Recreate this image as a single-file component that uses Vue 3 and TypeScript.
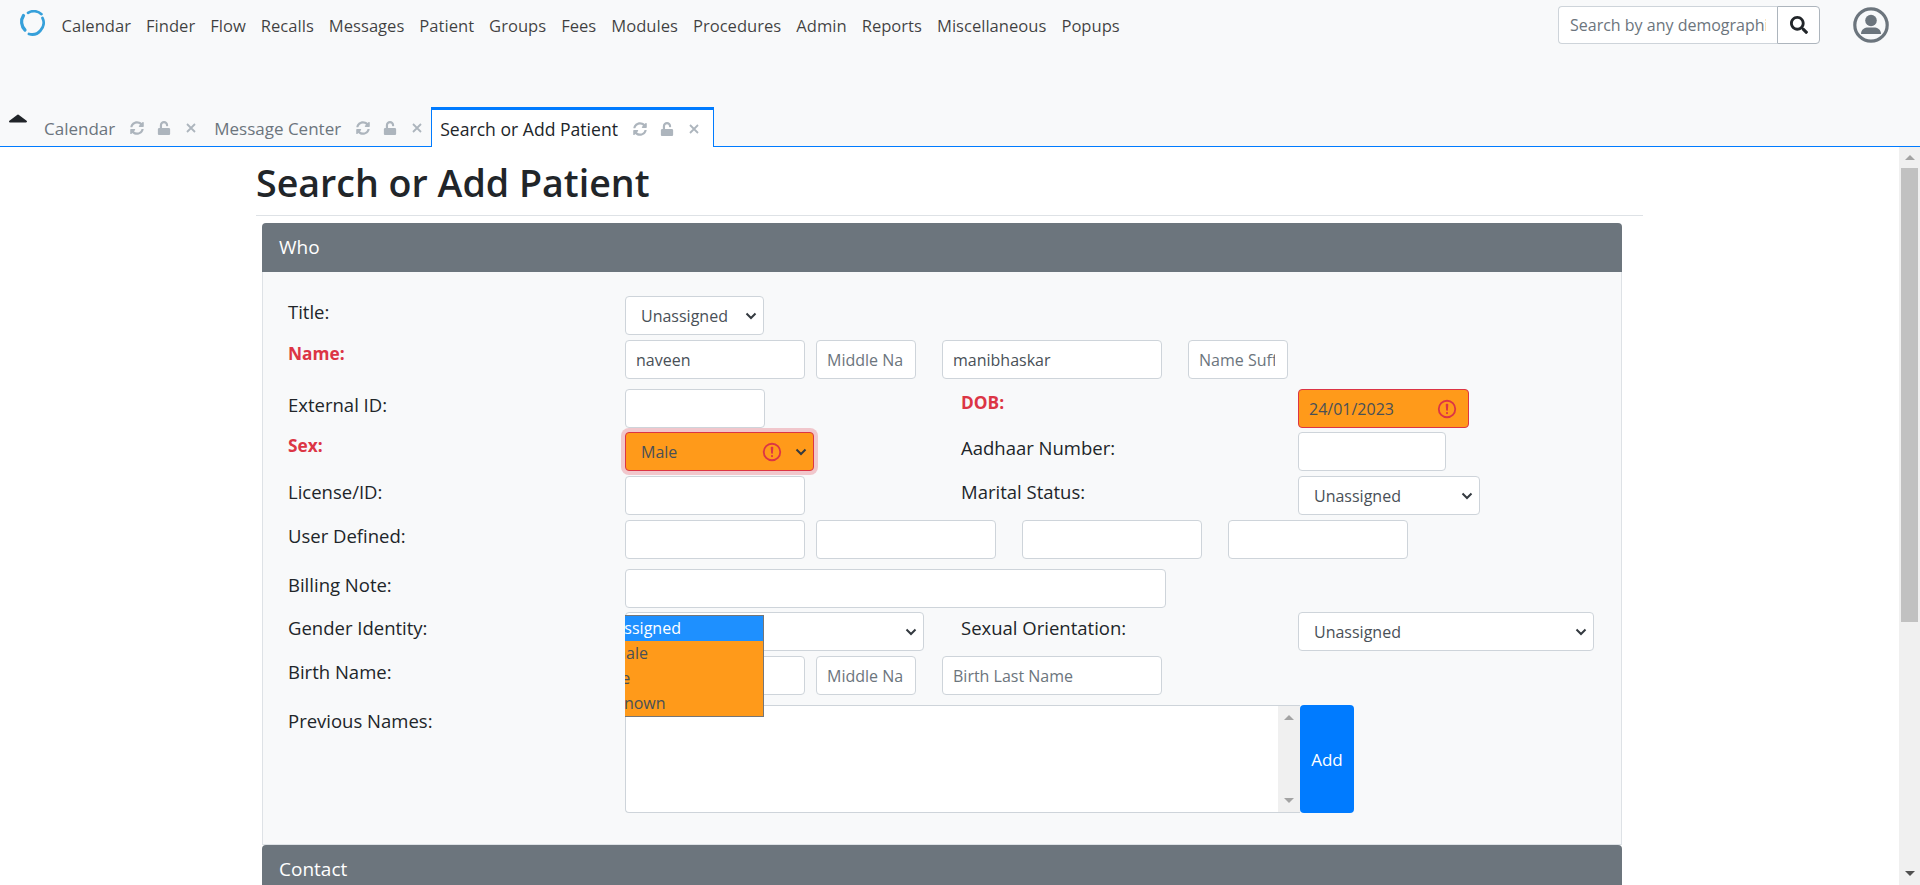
<script setup lang="ts">
const navItems = ["Calendar", "Finder", "Flow", "Recalls", "Messages", "Patient", "Groups", "Fees", "Modules", "Procedures", "Admin", "Reports", "Miscellaneous", "Popups"];
const tabs = [
  { name: "Calendar", active: false },
  { name: "Message Center", active: false },
  { name: "Search or Add Patient", active: true },
];
const sexOptions = ["Unassigned", "Female", "Male", "Unknown"];
</script>

<template>
  <div class="app">
    <header class="topbar">
      <nav class="navbar">
        <svg class="logo" viewBox="0 0 26 26" fill="none" stroke="#36a0da" stroke-linecap="round">
          <path d="M4.5 5.5 A11.5 11.5 0 0 0 6 20" stroke-width="3.2" />
          <path d="M9 2.8 A11 11 0 0 1 22.5 4.2" stroke-width="2.6" />
          <path d="M23.5 8 A11 11 0 0 1 21.5 20.5 A11 11 0 0 1 10 24" stroke-width="2.8" />
        </svg>
        <a v-for="item in navItems" :key="item" class="nav-link">{{ item }}</a>
        <div class="search">
          <input class="search-input" placeholder="Search by any demographics" />
          <button class="search-btn">
            <svg viewBox="0 0 512 512" width="18" height="18"><path fill="#212529" d="M505 442.7L405.3 343c-4.5-4.5-10.6-7-17-7H372c27.6-35.3 44-79.7 44-128C416 93.1 322.9 0 208 0S0 93.1 0 208s93.1 208 208 208c48.3 0 92.7-16.4 128-44v16.3c0 6.4 2.5 12.5 7 17l99.7 99.7c9.4 9.4 24.6 9.4 33.9 0l28.3-28.3c9.4-9.4 9.4-24.6.1-34zM208 336c-70.7 0-128-57.2-128-128 0-70.7 57.2-128 128-128 70.7 0 128 57.2 128 128 0 70.7-57.2 128-128 128z" /></svg>
          </button>
        </div>
        <svg class="avatar" viewBox="0 0 36 36">
          <circle cx="18" cy="18" r="16.2" fill="none" stroke="#6c757d" stroke-width="3.2" />
          <circle cx="18" cy="13.5" r="5.8" fill="#6c757d" />
          <path d="M8 27 C8 22 12 20.5 15 20.5 H21 C24 20.5 28 22 28 27 Z" fill="#6c757d" />
        </svg>
      </nav>
      <div class="tabbar">
        <svg class="collapse-arrow" viewBox="0 0 20 9"><path d="M2 7.5 L10 1.5 L18 7.5 Z" fill="#212529" stroke="#212529" stroke-width="2" stroke-linejoin="round" /></svg>
        <div v-for="tab in tabs" :key="tab.name" class="tab" :class="{ active: tab.active }">
          <span class="tab-name">{{ tab.name }}</span>
          <svg class="tab-icon" viewBox="0 0 512 512"><path fill="#adb5bd" d="M370.72 133.28C339.458 104.008 298.888 87.962 255.848 88c-77.458.068-144.328 53.178-162.791 126.85-1.344 5.363-6.122 9.15-11.651 9.15H24.103c-7.498 0-13.194-6.807-11.807-14.176C33.933 94.924 134.813 8 256 8c66.448 0 126.791 26.136 171.315 68.685L463.03 40.97C478.149 25.851 504 36.559 504 57.941V192c0 13.255-10.745 24-24 24H345.941c-21.382 0-32.09-25.851-16.971-40.971l41.75-41.749zM32 296h134.059c21.382 0 32.09 25.851 16.971 40.971l-41.75 41.75c31.262 29.273 71.835 45.319 114.876 45.28 77.418-.07 144.315-53.144 162.787-126.849 1.344-5.363 6.122-9.15 11.651-9.15h57.304c7.498 0 13.194 6.807 11.807 14.176C478.067 417.076 377.187 504 256 504c-66.448 0-126.791-26.136-171.315-68.685L48.97 471.03C33.851 486.149 8 475.441 8 454.059V320c0-13.255 10.745-24 24-24z" /></svg>
          <svg class="tab-icon" viewBox="0 0 448 512"><path fill="#adb5bd" d="M400 256H152V152.9c0-39.6 31.7-72.5 71.3-72.9 40-.4 72.7 32.1 72.7 72v16c0 13.3 10.7 24 24 24h32c13.3 0 24-10.7 24-24v-16C376 68 307.5-.3 223.5 0 139.5.3 72 69.5 72 153.5V256H48c-26.5 0-48 21.5-48 48v160c0 26.5 21.5 48 48 48h352c26.5 0 48-21.5 48-48V304c0-26.5-21.5-48-48-48z" /></svg>
          <svg class="tab-icon" viewBox="0 0 14 14"><path d="M3 3l8 8M11 3l-8 8" stroke="#adb5bd" stroke-width="1.8" fill="none" /></svg>
        </div>
      </div>
    </header>

    <div class="frame">
      <main class="page">
        <h1 class="title">Search or Add Patient</h1>
        <hr class="rule" />
        <section class="card">
          <div class="card-head">Who</div>
          <div class="card-body">
            <div class="row">
              <label class="lbl">Title:</label>
              <select class="ctl w-139"><option>Unassigned</option></select>
            </div>
            <div class="row mb-11">
              <label class="lbl req">Name:</label>
              <input class="ctl w-180" value="naveen" />
              <input class="ctl w-100 ml-11" placeholder="Middle Name" />
              <input class="ctl w-220 ml-26" value="manibhaskar" />
              <input class="ctl w-100 ml-26" placeholder="Name Suffix" />
            </div>
            <div class="row mb-5">
              <label class="lbl">External ID:</label>
              <div class="cell"><input class="ctl w-140" /></div>
              <label class="lbl-r req">DOB:</label>
              <input class="ctl w-171 invalid invalid-input" value="24/01/2023" />
            </div>
            <div class="row">
              <label class="lbl req">Sex:</label>
              <div class="cell"><select class="ctl w-189 invalid invalid-select"><option>Male</option></select></div>
              <label class="lbl-r">Aadhaar Number:</label>
              <input class="ctl w-148" />
            </div>
            <div class="row">
              <label class="lbl">License/ID:</label>
              <div class="cell"><input class="ctl w-180" /></div>
              <label class="lbl-r">Marital Status:</label>
              <select class="ctl w-182"><option>Unassigned</option></select>
            </div>
            <div class="row mb-11">
              <label class="lbl">User Defined:</label>
              <input class="ctl w-180" />
              <input class="ctl w-180 ml-11" />
              <input class="ctl w-180 ml-26" />
              <input class="ctl w-180 ml-26" />
            </div>
            <div class="row mb-5">
              <label class="lbl">Billing Note:</label>
              <input class="ctl w-541" />
            </div>
            <div class="row">
              <label class="lbl">Gender Identity:</label>
              <div class="cell gender-cell">
                <select class="ctl w-299"><option>Unassigned</option></select>
                <ul class="dropdown">
                  <li v-for="(opt, i) in sexOptions" :key="opt" :class="{ hover: i === 0 }"><span>{{ opt }}</span></li>
                </ul>
              </div>
              <label class="lbl-r">Sexual Orientation:</label>
              <select class="ctl w-296"><option>Unassigned</option></select>
            </div>
            <div class="row mb-11">
              <label class="lbl">Birth Name:</label>
              <input class="ctl w-180" placeholder="Birth First Name" />
              <input class="ctl w-100 ml-11" placeholder="Middle Name" />
              <input class="ctl w-220 ml-26" placeholder="Birth Last Name" />
            </div>
            <div class="row prev-row">
              <label class="lbl">Previous Names:</label>
              <div class="listbox">
                <div class="list-bar">
                  <span class="tri up"></span>
                  <span class="tri down"></span>
                </div>
              </div>
              <button class="add-btn">Add</button>
            </div>
          </div>
        </section>
        <section class="card">
          <div class="card-head">Contact</div>
        </section>
      </main>
      <div class="scrollbar">
        <span class="tri up page-tri"></span>
        <div class="thumb"></div>
        <span class="tri down page-tri dark"></span>
      </div>
    </div>
  </div>
</template>

<style>
html, body {
  margin: 0;
  overflow: hidden;
}
</style>

<style scoped>
.app {
  height: 885px;
  width: 1920px;
  display: flex;
  flex-direction: column;
  overflow: hidden;
  font-family: "Open Sans", "Noto Sans", sans-serif;
  font-size: 16px;
  color: #212529;
  background: #fff;
}
.topbar {
  height: 146px;
  flex: none;
  background: #f8f9fa;
  border-bottom: 1px solid #007bff;
  display: flex;
  flex-direction: column;
  justify-content: space-between;
}
.navbar {
  display: flex;
  align-items: center;
  height: 50px;
}
.logo {
  width: 26px;
  height: 26px;
  margin: 0 9px 5px 19px;
  flex: none;
}
.nav-link {
  padding: 0 7.5px;
  font-size: 16.6px;
  color: rgba(0, 0, 0, 0.75);
  white-space: nowrap;
}
.search {
  margin-left: auto;
  display: flex;
  height: 38px;
}
.search-input {
  width: 219px;
  box-sizing: border-box;
  height: 38px;
  padding: 0 11px;
  border: 1px solid #ced4da;
  border-right: 0;
  border-radius: 4px 0 0 4px;
  font: inherit;
  outline: none;
}
.search-input::placeholder,
.ctl::placeholder {
  color: #6c757d;
  opacity: 1;
}
.search-btn {
  width: 43px;
  height: 38px;
  box-sizing: border-box;
  border: 1px solid #adb5bd;
  border-radius: 0 4px 4px 0;
  background: #fff;
  padding: 0;
  display: flex;
  align-items: center;
  justify-content: center;
}
.avatar {
  width: 36px;
  height: 36px;
  margin: 0 31px 0 33px;
  flex: none;
}
.tabbar {
  display: flex;
  align-items: stretch;
  height: 39px;
  padding-left: 8px;
}
.collapse-arrow {
  width: 20px;
  height: 9px;
  margin: 7px 7px 0 0;
  flex: none;
}
.tab {
  display: flex;
  align-items: center;
  padding: 0 6px 0 8px;
  font-size: 17px;
  color: #6c757d;
  box-sizing: border-box;
  height: 39px;
  border: 1px solid transparent;
  border-top-width: 3px;
  border-bottom: 0;
  white-space: nowrap;
}
.tab.active {
  background: #fff;
  color: #212529;
  border-color: #007bff;
  font-size: 17.6px;
  height: 40px;
  margin-bottom: -1px;
  padding-right: 12px;
  position: relative;
}
.tab-icon {
  width: 14px;
  height: 14px;
  margin-left: 13px;
}
.tab-name + .tab-icon {
  margin-left: 15px;
}
.frame {
  flex: 1;
  display: flex;
  min-height: 0;
}
.page {
  flex: 1;
  padding: 0 0 0 256px;
  overflow: hidden;
}
.title {
  width: 1387px;
  margin: 0;
  padding-top: 12px;
  font-size: 37.6px;
  line-height: 48px;
  font-weight: 600;
  color: #212529;
}
.rule {
  width: 1387px;
  margin: 8px 0 7px;
  border: 0;
  border-top: 1px solid #dee2e6;
}
.card {
  width: 1360px;
  margin-left: 6px;
}
.card-head {
  height: 49px;
  line-height: 49px;
  padding-left: 17px;
  font-size: 19px;
  background: #6c757d;
  color: #fff;
  border-radius: 4px 4px 0 0;
}
.card-body {
  box-sizing: border-box;
  height: 573px;
  padding: 24px 0 0 25px;
  background: #f8f9fa;
  border: 1px solid #dee2e6;
  border-top: 0;
}
.row {
  display: flex;
  height: 38px;
  margin-bottom: 6px;
}
.lbl,
.lbl-r {
  flex: none;
  width: 337px;
  font-size: 18.5px;
  line-height: 24px;
  padding-top: 4px;
  box-sizing: border-box;
}
.req {
  color: #dc3545;
  font-weight: 700;
  font-size: 17.3px;
  padding-top: 2px;
}
.cell {
  flex: none;
  width: 336px;
}
.ctl {
  display: block;
  flex: none;
  box-sizing: border-box;
  height: 39px;
  padding: 0 12px 0 10px;
  border: 1px solid #ced4da;
  border-radius: 4px;
  background-color: #fff;
  color: #495057;
  font: inherit;
  outline: none;
}
select.ctl {
  appearance: none;
  padding: 0 24px 0 15px;
  background-image: url("data:image/svg+xml,%3csvg xmlns='http://www.w3.org/2000/svg' width='12' height='8' viewBox='0 0 12 8'%3e%3cpath d='M1.5 1.5L6 6l4.5-4.5' fill='none' stroke='%23343a40' stroke-width='2'/%3e%3c/svg%3e");
  background-repeat: no-repeat;
  background-position: right 6px center;
  background-size: 12px 8px;
}
.invalid {
  background-color: #ff9a1a;
  border-color: #dc3545;
  background-image: url("data:image/svg+xml,%3csvg xmlns='http://www.w3.org/2000/svg' width='12' height='12' fill='none' stroke='%23dc3545' viewBox='0 0 12 12'%3e%3ccircle cx='6' cy='6' r='4.5'/%3e%3cpath stroke-linejoin='round' d='M5.8 3.6h.4L6 6.5z'/%3e%3ccircle cx='6' cy='8.2' r='.6' fill='%23dc3545' stroke='none'/%3e%3c/svg%3e");
  background-repeat: no-repeat;
  background-size: 22px 22px;
}
.invalid-input {
  background-position: right 10px center;
}
select.invalid-select {
  background-image:
    url("data:image/svg+xml,%3csvg xmlns='http://www.w3.org/2000/svg' width='12' height='12' fill='none' stroke='%23dc3545' viewBox='0 0 12 12'%3e%3ccircle cx='6' cy='6' r='4.5'/%3e%3cpath stroke-linejoin='round' d='M5.8 3.6h.4L6 6.5z'/%3e%3ccircle cx='6' cy='8.2' r='.6' fill='%23dc3545' stroke='none'/%3e%3c/svg%3e"),
    url("data:image/svg+xml,%3csvg xmlns='http://www.w3.org/2000/svg' width='12' height='8' viewBox='0 0 12 8'%3e%3cpath d='M1.5 1.5L6 6l4.5-4.5' fill='none' stroke='%23343a40' stroke-width='2'/%3e%3c/svg%3e");
  background-position: right 30px center, right 6px center;
  background-size: 22px 22px, 12px 8px;
  box-shadow: 0 0 0 4px rgba(220, 53, 69, 0.25);
}
.w-100 { width: 100px; }
.w-139 { width: 139px; }
.w-140 { width: 140px; }
.w-148 { width: 148px; }
.w-171 { width: 171px; }
.w-180 { width: 180px; }
.w-182 { width: 182px; }
.w-189 { width: 189px; }
.w-220 { width: 220px; }
.w-296 { width: 296px; }
.w-299 { width: 299px; }
.w-541 { width: 541px; }
.ml-11 { margin-left: 11px; }
.ml-26 { margin-left: 26px; }
.mb-5 { margin-bottom: 5px; }
.mb-11 { margin-bottom: 11px; }
.gender-cell {
  position: relative;
}
.dropdown {
  position: absolute;
  left: 0;
  top: 3px;
  width: 139px;
  box-sizing: border-box;
  margin: 0;
  padding: 0;
  list-style: none;
  background: #ff9a1a;
  border: 1px solid #767676;
  border-left: 0;
  overflow: hidden;
  color: #495057;
}
.dropdown li {
  height: 25px;
  line-height: 25px;
  white-space: nowrap;
}
.dropdown li span {
  margin-left: -31px;
}
.dropdown li.hover {
  background: #1e90ff;
  color: #fff;
}
.prev-row {
  height: 108px;
}
.listbox {
  width: 675px;
  height: 108px;
  flex: none;
  box-sizing: border-box;
  background: #fff;
  border: 1px solid #ced4da;
  border-right: 0;
  border-radius: 4px 0 0 4px;
  display: flex;
  justify-content: flex-end;
}
.list-bar {
  width: 22px;
  background: #f0f0f0;
  display: flex;
  flex-direction: column;
  justify-content: space-between;
  align-items: center;
  padding: 9px 0;
  box-sizing: border-box;
}
.tri {
  width: 0;
  height: 0;
  border-left: 5px solid transparent;
  border-right: 5px solid transparent;
}
.tri.up {
  border-bottom: 5px solid #a3a3a3;
}
.tri.down {
  border-top: 5px solid #a3a3a3;
}
.add-btn {
  width: 54px;
  height: 108px;
  flex: none;
  background: #007bff;
  color: #fff;
  border: 0;
  border-radius: 4px;
  font: inherit;
  font-size: 17px;
  padding: 0;
}
.scrollbar {
  width: 21px;
  flex: none;
  background: #f0f0f0;
  display: flex;
  flex-direction: column;
  align-items: center;
}
.page-tri.up {
  margin-top: 8px;
}
.thumb {
  width: 17px;
  height: 454px;
  background: #c1c1c1;
  margin-top: 8px;
}
.page-tri.down {
  margin-top: auto;
  margin-bottom: 9px;
}
.tri.down.dark {
  border-top-color: #505050;
}
</style>
